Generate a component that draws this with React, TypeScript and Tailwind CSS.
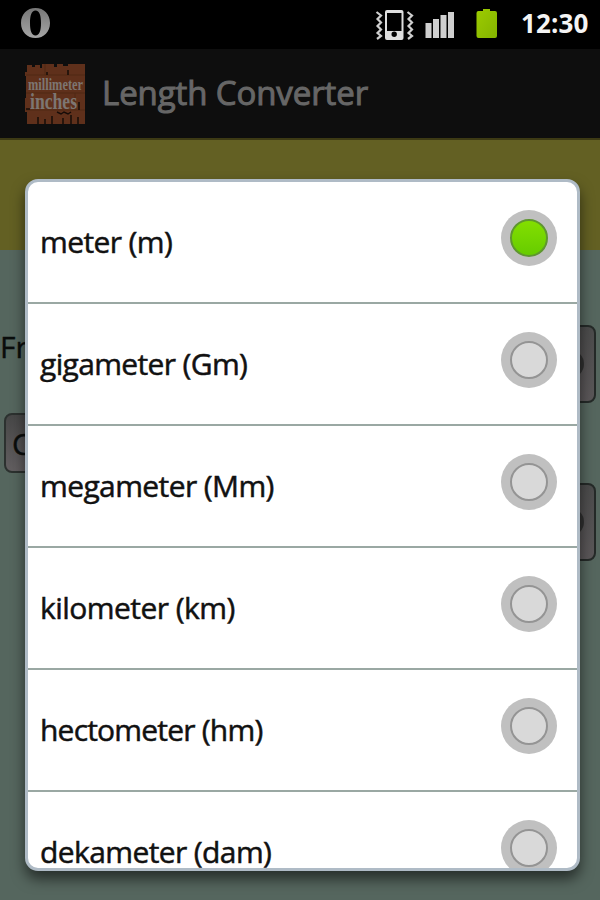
import { clsx } from 'clsx';

const units = [
  { label: 'meter (m)', spacing: 'tracking-[-0.6px]' },
  { label: 'gigameter (Gm)', spacing: 'tracking-[-0.65px]' },
  { label: 'megameter (Mm)', spacing: 'tracking-[-0.6px]' },
  { label: 'kilometer (km)', spacing: 'tracking-[-0.55px]' },
  { label: 'hectometer (hm)', spacing: 'tracking-[-0.8px]' },
  { label: 'dekameter (dam)', spacing: 'tracking-[-0.6px]' },
];

function StatusBar() {
  return (
    <div className="flex h-[49px] w-full items-start bg-black">
      <svg className="ml-5 mt-[7px] h-8 w-[31px]" viewBox="0 0 31 32">
        <defs>
          <linearGradient id="opera" x1="0" y1="0" x2="0" y2="1">
            <stop offset="0" stopColor="#777" />
            <stop offset="1" stopColor="#a5a5a5" />
          </linearGradient>
        </defs>
        <path
          fill="url(#opera)"
          fillRule="evenodd"
          d="M15.500 1C7 1 1 7.200 1 16s6 15 14.500 15S30 24.800 30 16 24 1 15.500 1Zm0 2.500c4 0 5.500 5 5.500 12.500s-1.500 12.500-5.500 12.500S10 23.500 10 16 11.500 3.500 15.500 3.500Z"
        />
      </svg>

      <svg className="ml-auto mt-[8px] h-[33px] w-10" viewBox="0 0 40 33">
        <g fill="none" stroke="#cfcfcf" strokeWidth="2.200">
          <path d="M1.500 4l4.500 3.500L2.500 11 6 14.500 2.500 18 6 21.500 2.500 25 6 28l-4 3" />
          <path d="M32.500 4l4.500 3.500-3.500 3.500 3.500 3.500-3.500 3.500 3.500 3.500-3.500 3.500 3.500 3-4 3" />
        </g>
        <path
          fill="#dedede"
          fillRule="evenodd"
          d="M12 2h14.500a2 2 0 0 1 2 2v26a2 2 0 0 1-2 2H12a2 2 0 0 1-2-2V4a2 2 0 0 1 2-2Zm0 3v18h14.500V5Zm7.200 18.500a2.700 2.700 0 1 0 0 5.400 2.700 2.700 0 0 0 0-5.400Z"
        />
      </svg>

      <svg className="ml-[10px] mt-[10px] h-[29px] w-[30px]" viewBox="0 0 30 29" fill="#cfcfcf">
        <rect x="0.500" y="13" width="6" height="15" />
        <rect x="8" y="9" width="6" height="19" />
        <rect x="15.500" y="5" width="6" height="23" />
        <rect x="23" y="2" width="6" height="26" />
      </svg>

      <svg className="ml-5 mt-[7px] h-8 w-6" viewBox="0 0 24 32">
        <defs>
          <linearGradient id="battery" x1="0" y1="0" x2="1" y2="1">
            <stop offset="0" stopColor="#9ccb00" />
            <stop offset="1" stopColor="#84b400" />
          </linearGradient>
        </defs>
        <path
          fill="url(#battery)"
          d="M8 2h7v2h5a2 2 0 0 1 2 2v23a2 2 0 0 1-2 2H3.500a2 2 0 0 1-2-2V6a2 2 0 0 1 2-2H8Z"
        />
      </svg>

      <span className="ml-[22px] mr-3 mt-1 w-[67px] whitespace-nowrap text-[26px] font-bold leading-[38px] tracking-[0.1px] text-[#f4f4f4]">
        12:30
      </span>
    </div>
  );
}

function AppIcon() {
  return (
    <svg className="size-[60px]" viewBox="0 0 60 60">
      <path
        fill="#5f301b"
        d="M2 1h5v2h3V1h5v3h2V0h12v3h3V0h6v2h5V0h17v60H2V48H0V34h1V12H0V8h2Z"
      />
      <path stroke="#512814" d="M1 11h59M1 46h59M1 29h59M20 0v11M50 29v17" />
      <path
        fill="none"
        stroke="#160c08"
        strokeWidth="1.500"
        d="M13 53v7M20 55v5M27 52v8M38 54v6M46 51v9M53 53v7M43 6v5M54 38v8M1 45h4M22 11V8M32 48l4 2 3-2 4 2 3-2"
      />
      <g className="font-['Liberation_Serif',serif] font-bold" fill="#7d7672">
        <text x="3" y="26" fontSize="17" textLength="55" lengthAdjust="spacingAndGlyphs">millimeter</text>
        <text x="5" y="45" fontSize="23" textLength="47" lengthAdjust="spacingAndGlyphs">inches</text>
      </g>
    </svg>
  );
}

function Spinner() {
  return (
    <div className="flex h-[78px] w-[200px] items-center justify-end rounded-lg border-2 border-[#252a28] bg-linear-to-b from-[#4b4b4b] to-[#5b5759] pr-[10px]">
      <div className="size-7 rounded-full bg-[#303030]" />
    </div>
  );
}

function Converter() {
  return (
    <div className="flex grow flex-col gap-[10px] bg-[#55665e] pt-[75px] text-[30px] text-[#0a0d0c] [-webkit-text-stroke:0.4px]">
      <div className="flex h-[78px] items-start justify-between pr-1">
        <span className="leading-[44px]">From</span>
        <Spinner />
      </div>
      <div className="ml-1 flex h-[60px] w-[160px] items-center rounded-lg border-2 border-[#2c312f] bg-linear-to-b from-[#474747] to-[#625e60] pl-[6px]">
        Convert
      </div>
      <div className="flex justify-end pr-1">
        <Spinner />
      </div>
    </div>
  );
}

function Radio({ checked }: { checked: boolean }) {
  return (
    <div className="flex size-14 items-center justify-center rounded-full bg-[#c0c0c0]">
      <div
        className={clsx(
          'size-[38px] rounded-full border-2',
          checked
            ? 'border-[#5f9630] bg-linear-to-b from-[#83df00] to-[#66cc00]'
            : 'border-[#949494] bg-[#d9d9d9]',
        )}
      />
    </div>
  );
}

function UnitDialog() {
  return (
    <div className="absolute left-[25px] top-[179px] h-[692px] w-[555px] overflow-hidden rounded-[13px] border-[3px] border-[#afbbc6] bg-white shadow-[0_8px_14px_rgba(0,0,0,0.55)]">
      {units.map((unit, index) => (
        <div
          key={unit.label}
          className="flex h-[122px] items-start justify-between border-b-2 border-[#9aa8a3] pl-3 pr-[20px]"
        >
          <span
            className={clsx(
              'mt-[40px] whitespace-nowrap text-[30px] leading-[40px] text-[#111] [-webkit-text-stroke:0.5px]',
              unit.spacing,
            )}
          >
            {unit.label}
          </span>
          <div className="mt-[28px]">
            <Radio checked={index === 0} />
          </div>
        </div>
      ))}
    </div>
  );
}

export default function App() {
  return (
    <div className="relative flex h-[900px] w-[600px] flex-col overflow-hidden bg-black font-['Open_Sans','Noto_Sans',sans-serif]">
      <StatusBar />
      <div className="flex h-[89px] items-center bg-[#0e0e0e] pl-[25px]">
        <AppIcon />
        <h1 className="mb-px ml-[17px] whitespace-nowrap text-[33px] leading-10 tracking-[-0.1px] text-[#666] [-webkit-text-stroke:1px]">
          Length Converter
        </h1>
      </div>
      <div className="h-[112px] border-t-2 border-[#3d3a14] bg-[#636023]" />
      <Converter />
      <UnitDialog />
    </div>
  );
}
